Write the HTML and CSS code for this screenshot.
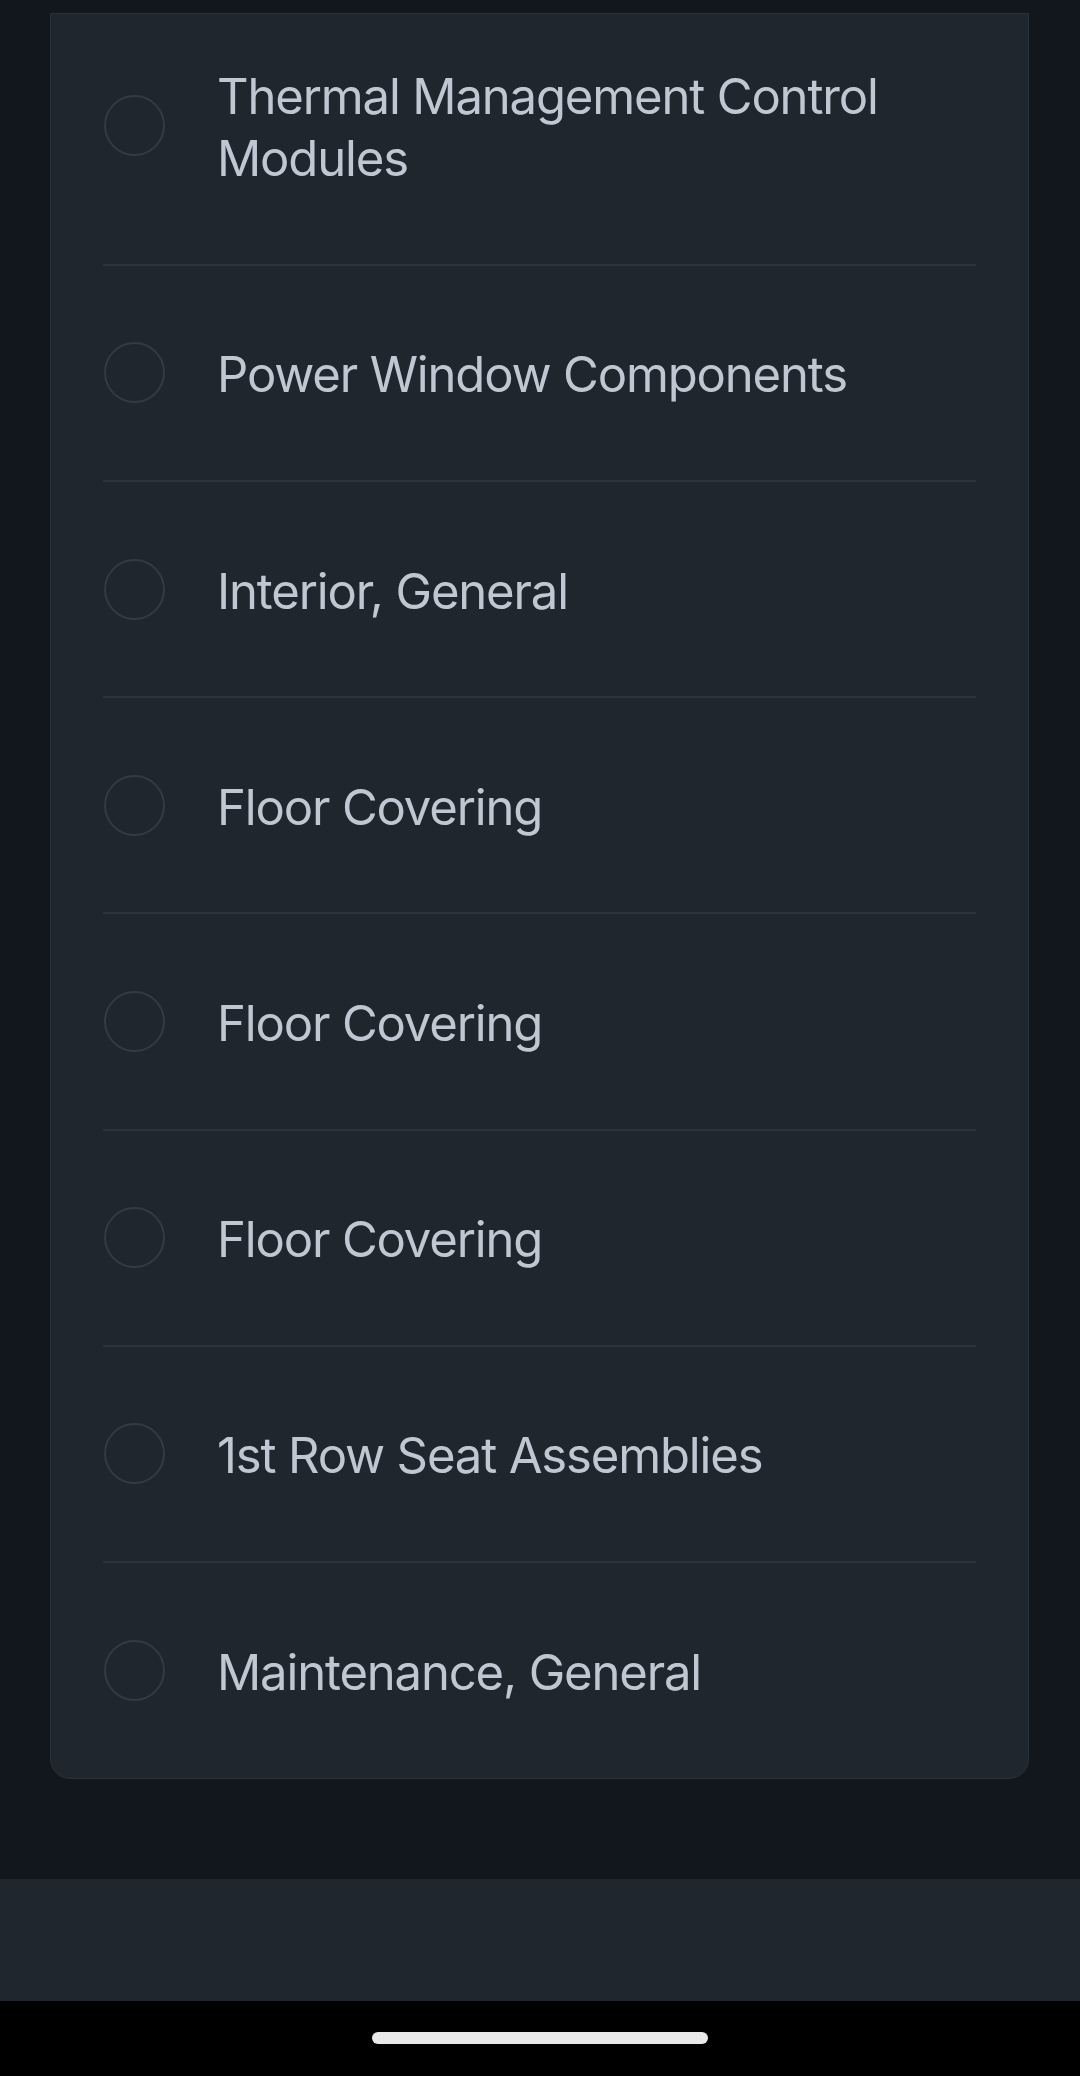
FILE: index.html
```html
<!DOCTYPE html>
<html lang="en">
<head>
<meta charset="utf-8">
<title>Components</title>
<link rel="stylesheet" href="styles.css">
</head>
<body>
<div class="screen">
  <div class="top-gap"></div>
  <div class="card">
    <ul class="list">
      <li class="row"><span class="radio"></span><span class="label">Thermal Management Control Modules</span></li>
      <li class="row"><span class="radio"></span><span class="label">Power Window Components</span></li>
      <li class="row"><span class="radio"></span><span class="label">Interior, General</span></li>
      <li class="row"><span class="radio"></span><span class="label">Floor Covering</span></li>
      <li class="row"><span class="radio"></span><span class="label">Floor Covering</span></li>
      <li class="row"><span class="radio"></span><span class="label">Floor Covering</span></li>
      <li class="row"><span class="radio"></span><span class="label">1st Row Seat Assemblies</span></li>
      <li class="row"><span class="radio"></span><span class="label">Maintenance, General</span></li>
    </ul>
  </div>
  <div class="spacer"></div>
  <div class="bottom-bar"></div>
  <div class="home-area"><span class="home-indicator"></span></div>
</div>
</body>
</html>
```
FILE: styles.css
```css
* { box-sizing: border-box; }
html, body { margin: 0; padding: 0; }
body {
  background: #12171e;
  font-family: Inter, "Liberation Sans", sans-serif;
}
.screen {
  width: 1080px;
  height: 2076px;
  display: flex;
  flex-direction: column;
  overflow: hidden;
}
.top-gap { height: 13px; flex: none; }
.card {
  flex: none;
  height: 1766px;
  margin: 0 51px 0 50px;
  background: #1f262e;
  border: 1px solid #29313a;
  border-radius: 0 0 20px 20px;
  overflow: hidden;
}
.list {
  list-style: none;
  margin: -26.3px 0 0 0;
  padding: 0 52px;
}
.row {
  display: flex;
  align-items: center;
  gap: 52px;
  padding: 73.6px 0 73.6px 1px;
  border-bottom: 2px solid #2b343d;
}
.row:last-child { border-bottom: none; }
.radio {
  flex: none;
  width: 61px;
  height: 61px;
  border: 2px solid #323b45;
  border-radius: 50%;
}
.label {
  padding-top: 5px;
  font-size: 49px;
  line-height: 62px;
  color: #bfc8d2;
  letter-spacing: -1.15px;
}
.spacer { flex: none; height: 100px; }
.bottom-bar { flex: none; height: 122px; background: #1f262e; }
.home-area {
  flex: 1;
  background: #000;
  display: flex;
  justify-content: center;
  padding-top: 31px;
}
.home-indicator {
  width: 336px;
  height: 12px;
  border-radius: 6px;
  background: #e9e9e9;
}
```
